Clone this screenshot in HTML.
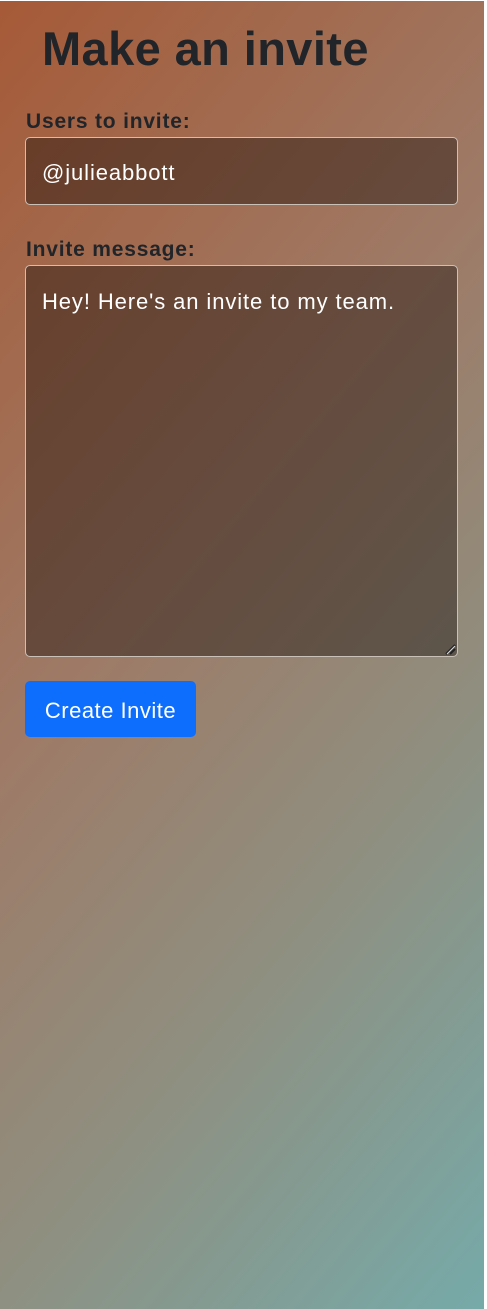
<!DOCTYPE html>
<html><head><style>
html,body{margin:0;padding:0;}
body{width:487px;height:1309px;position:relative;overflow:hidden;background:#fff;font-family:"Liberation Sans",sans-serif;}
.bg{position:absolute;left:0;top:1px;width:484px;height:1308px;background:linear-gradient(130deg,#a65a37 0%,#9e7a66 40%,#8f8f80 68%,#76aaa9 100%);}
h1{position:absolute;left:42px;top:21px;margin:0;font-size:47px;font-weight:bold;color:#212529;letter-spacing:0.4px;}
.lbl{position:absolute;left:26px;font-size:21px;font-weight:bold;color:#212529;letter-spacing:0.8px;}
.box{position:absolute;left:25px;width:433px;border:1px solid #c9c0b8;border-radius:5px;background:rgba(25,12,8,0.42);color:#fff;font-size:22px;letter-spacing:0.9px;box-sizing:border-box;}
.btn{position:absolute;left:25px;top:681px;width:171px;height:56px;background:#0d6efd;border-radius:5px;color:#fff;font-size:22px;letter-spacing:0.5px;line-height:60px;text-align:center;}
</style></head><body>
<div class="bg"></div>
<h1>Make an invite</h1>
<div class="lbl" style="top:110px">Users to invite:</div>
<div class="box" style="top:137px;height:68px;padding:22px 0 0 16px">@julieabbott</div>
<div class="lbl" style="top:238px">Invite message:</div>
<div class="box" style="top:265px;height:392px;padding:23px 0 0 16px">Hey! Here's an invite to my team.
<svg style="position:absolute;right:1px;bottom:1px" width="12" height="12"><path d="M2 11L11 2M6 11L11 6" stroke="#222" stroke-width="2"/><path d="M3 11L11 3" stroke="#ddd" stroke-width="1"/></svg></div>
<div class="btn">Create Invite</div>
</body></html>
